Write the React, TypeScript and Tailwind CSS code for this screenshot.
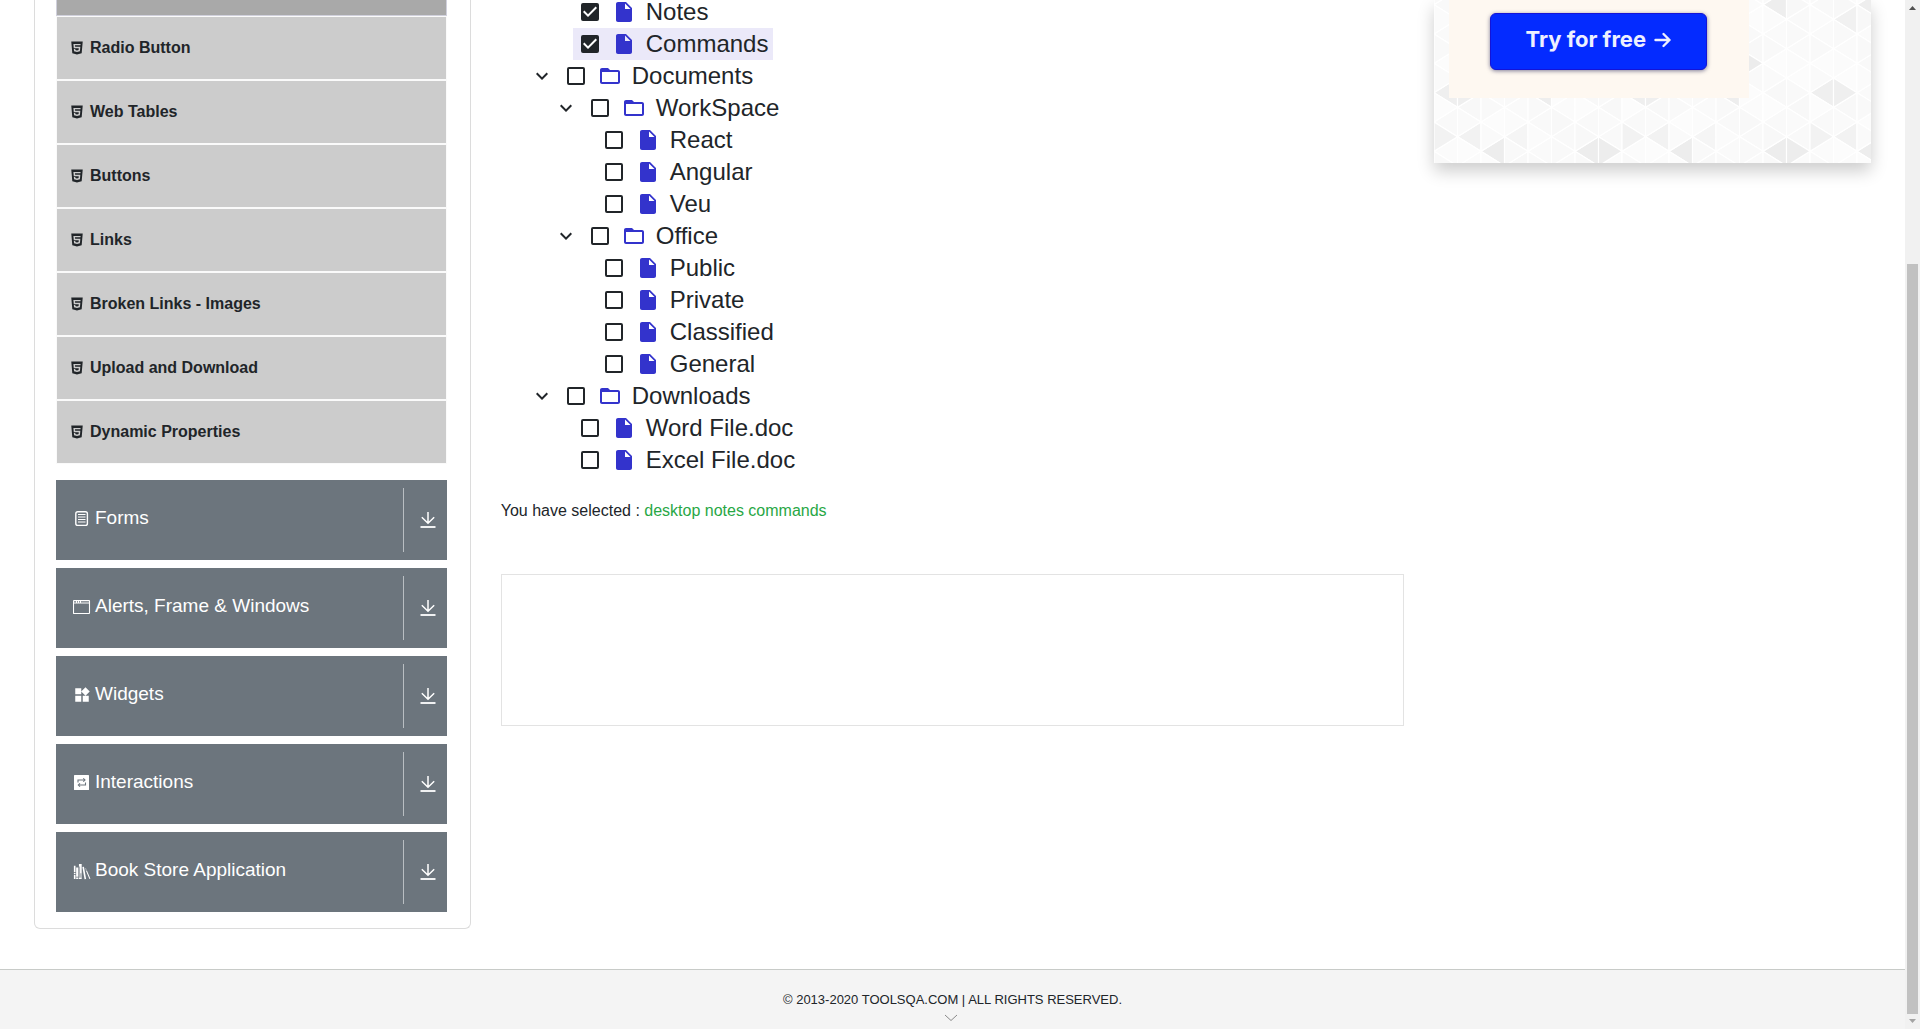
import React from "react";
import { AiFillHtml5 } from "react-icons/ai";
import { MdWidgets, MdInsertDriveFile, MdKeyboardArrowDown } from "react-icons/md";
import { GiBookshelf } from "react-icons/gi";

const menuItems = [
  "Radio Button",
  "Web Tables",
  "Buttons",
  "Links",
  "Broken Links - Images",
  "Upload and Download",
  "Dynamic Properties",
];

function FormsIcon() {
  return (
    <svg viewBox="0 0 18 18" className="size-[18px]" fill="none" stroke="currentColor">
      <rect x="2.8" y="1.8" width="11.600" height="13.600" rx="2" strokeWidth="1.4" />
      <path d="M5 4.500h7.500M5 7h7.500M5 9.500h7.500M5 12h7.500" strokeWidth="1.1" />
    </svg>
  );
}

function WindowIcon() {
  return (
    <svg viewBox="0 0 18 18" className="size-[18px]" fill="none" stroke="currentColor">
      <rect x="0.500" y="2.500" width="16" height="13" rx="0.500" strokeWidth="1.1" />
      <path d="M1 3h15" strokeWidth="1" strokeOpacity="0.5" />
      <path d="M.5 5h16M3.500 2.500v2.500M5.500 2.500v2.500M7.500 2.500v2.500" strokeWidth="1" />
    </svg>
  );
}

function InteractionsIcon() {
  return (
    <svg viewBox="0 0 18 18" className="size-[18px]">
      <rect x="1" y="1" width="15" height="15" rx="0.500" fill="currentColor" />
      <g fill="none" stroke="#6c757d" strokeWidth="1.1">
        <path d="M5 8.500V6h6.500M12.500 8.500V11H6" />
        <path d="M10.300 4.300L12 6l-1.700 1.700M7 9.300L5.300 11 7 12.700" />
      </g>
    </svg>
  );
}

function DownIcon() {
  return (
    <svg viewBox="0 0 16 16" className="size-4" fill="none" stroke="currentColor">
      <path d="M8 0v11M1.800 5.300L8 11.300l6.200-6" strokeWidth="1.500" />
      <path d="M.5 15h15" strokeWidth="1.800" />
    </svg>
  );
}

const groups = [
  { label: "Forms", icon: <FormsIcon /> },
  { label: "Alerts, Frame & Windows", icon: <WindowIcon /> },
  { label: "Widgets", icon: <MdWidgets className="size-[18px]" /> },
  { label: "Interactions", icon: <InteractionsIcon /> },
  { label: "Book Store Application", icon: <GiBookshelf className="size-[18px]" /> },
];

function Sidebar() {
  return (
    <nav className="rounded-b-md border border-t-0 border-[#dcdcdc] pr-[23px] pb-4 pl-[21px]">
      <ul className="mb-4">
        <li className="h-4 border border-t-0 border-[#d0d0dc] bg-[#a9a9a9]" />
        {menuItems.map((item) => (
          <li key={item} className="border border-[#fafafa] bg-[#ccc]">
            <a href="#" className="flex h-[62px] items-center gap-[5px] px-3 text-base font-bold">
              <AiFillHtml5 className="size-4" />
              {item}
            </a>
          </li>
        ))}
      </ul>
      <div className="flex flex-col gap-2">
        {groups.map((g) => (
          <button
            key={g.label}
            type="button"
            className="flex h-20 w-full items-center bg-[#6c757d] text-left text-[19px] text-white"
          >
            <span className="flex grow items-center gap-1 pb-1 pl-[17px]">
              <span className="mt-0.5">{g.icon}</span>
              {g.label}
            </span>
            <span className="flex h-16 items-center border-l border-[#b9bec2] pr-[11px] pl-4">
              <DownIcon />
            </span>
          </button>
        ))}
      </div>
    </nav>
  );
}

type Node = { label: string; level: number; folder?: boolean; checked?: boolean; active?: boolean };

const nodes: Node[] = [
  { label: "Notes", level: 1, checked: true },
  { label: "Commands", level: 1, checked: true, active: true },
  { label: "Documents", level: 0, folder: true },
  { label: "WorkSpace", level: 1, folder: true },
  { label: "React", level: 2 },
  { label: "Angular", level: 2 },
  { label: "Veu", level: 2 },
  { label: "Office", level: 1, folder: true },
  { label: "Public", level: 2 },
  { label: "Private", level: 2 },
  { label: "Classified", level: 2 },
  { label: "General", level: 2 },
  { label: "Downloads", level: 0, folder: true },
  { label: "Word File.doc", level: 1 },
  { label: "Excel File.doc", level: 1 },
];

const indents = ["pl-6", "pl-12", "pl-[72px]"];

function FolderIcon() {
  return (
    <svg viewBox="0 0 24 24" className="size-6 fill-[#3333cc]">
      <path d="M20 6h-8l-2-2H4c-1.100 0-1.990.9-1.990 2L2 18c0 1.100.9 2 2 2h16c1.100 0 2-.9 2-2V8c0-1.100-.9-2-2-2zm0 12H4V8h16v10z" />
    </svg>
  );
}

function TreeRow({ node }: { node: Node }) {
  return (
    <li className={`flex h-8 first:h-7 first:pb-1 ${indents[node.level]}`}>
      {node.folder ? (
        <button type="button" aria-label={`Collapse ${node.label}`} className="flex items-center px-[5px]">
          <MdKeyboardArrowDown className="size-6" />
        </button>
      ) : (
        <span className="w-6" />
      )}
      <label className={`flex items-center ${node.active ? "bg-[#ebe9f9]" : ""}`}>
        <span className="grid place-items-center px-2">
          <input
            type="checkbox"
            defaultChecked={node.checked}
            className="peer col-start-1 row-start-1 size-[18px] appearance-none rounded-[2px] border-2 border-[#212529] checked:bg-[#212529]"
          />
          <svg
            viewBox="0 0 18 18"
            className="pointer-events-none invisible col-start-1 row-start-1 size-[18px] fill-white peer-checked:visible"
          >
            <path d="M7 14L2 9l1.410-1.410L7 11.170l7.590-7.590L16 5l-9 9z" />
          </svg>
        </span>
        <span className="px-[5px]">
          {node.folder ? <FolderIcon /> : <MdInsertDriveFile className="size-6 text-[#3333cc]" />}
        </span>
        <span className="px-[5px] text-2xl leading-6">{node.label}</span>
      </label>
    </li>
  );
}

const COL = 23.5;
const SIDE = 29.33;
const plain = ["#f9f9f9", "#fbfbfb", "#f9f9f9", "#fafafa", "#fcfcfc", "#f8f8f8"];

// Shaded triangles, keyed by column within the eight-column repeat, direction and tip height.
const shaded: Record<string, string> = {
  "2L151": "#ededed",
  "6L151": "#ededed",
  "7R151": "#ededed",
  "0R137": "#f2f2f2",
  "1L137": "#f2f2f2",
  "3L137": "#f5f5f5",
  "0L93": "#efefef",
  "1R93": "#efefef",
  "4L93": "#eeeeee",
  "5R63": "#ececec",
  "6L5": "#eeeeee",
  "2L5": "#eeeeee",
  "1L19": "#f1f1f1",
};

function TrianglePattern() {
  const shapes: React.ReactNode[] = [];
  for (let c = 0; c < 22; c++) {
    for (const dir of ["L", "R"]) {
      const tipEdge = dir === "L" ? c : c + 1;
      const baseEdge = dir === "L" ? c + 1 : c;
      const start = tipEdge % 2 === 0 ? 4.7 : -10;
      for (let k = 0; k < 7; k++) {
        const y = start + k * SIDE;
        const fill =
          shaded[`${c % 8}${dir}${Math.round(y)}`] ?? plain[((c % 8) * 5 + k * 7 + (dir === "L" ? 2 : 0)) % 6];
        const bx = baseEdge * COL;
        shapes.push(
          <polygon
            key={`${c}${dir}${k}`}
            points={`${tipEdge * COL},${y} ${bx},${y - SIDE / 2} ${bx},${y + SIDE / 2}`}
            fill={fill}
          />
        );
      }
    }
  }
  return (
    <svg className="absolute inset-0 size-full" stroke="#fff" strokeWidth="1.2" aria-hidden="true">
      {shapes}
    </svg>
  );
}

function Promo() {
  return (
    <aside className="relative h-[163px] pl-[15px] shadow-[0_8px_16px_rgba(0,0,0,0.2)]">
      <TrianglePattern />
      <div className="relative h-[98px] w-[300px] bg-[#fef8f1] pt-[13px] pl-[41px]">
        <button
          type="button"
          className="flex h-[57px] w-[217px] items-center justify-center gap-2 rounded-md border border-[#1414d8] bg-[#042bff] pb-1 font-[Inter,sans-serif] text-[22px] font-bold text-[#eef0ff] shadow-[0_1px_4px_rgba(0,0,60,0.5)]"
        >
          Try for free
          <svg viewBox="0 0 18 16" className="h-4 w-[18px]" fill="none" stroke="currentColor" strokeWidth="2.4">
            <path d="M1.500 8h14M9.500 2l6 6-6 6" strokeLinecap="round" strokeLinejoin="round" />
          </svg>
        </button>
      </div>
    </aside>
  );
}

function Scrollbar() {
  return (
    <div className="flex w-[15px] shrink-0 flex-col items-center bg-[#f1f1f1]" aria-hidden="true">
      <svg viewBox="0 0 15 15" className="size-[15px] fill-[#505050]">
        <path d="M4 10h7L7.500 6z" />
      </svg>
      <div className="h-[249px] shrink-0" />
      <div className="w-[11px] grow bg-[#c1c1c1]" />
      <svg viewBox="0 0 15 15" className="size-[15px] fill-[#a3a3a3]">
        <path d="M4 5h7L7.500 9z" />
      </svg>
    </div>
  );
}

export default function App() {
  return (
    <div className="flex min-h-screen bg-white font-['Liberation_Sans',Arial,sans-serif] text-[#212529]">
      <div className="flex min-w-0 grow flex-col">
        <div className="grid grid-cols-4 gap-[30px] px-[34px] pb-10">
          <Sidebar />
          <main className="col-span-2">
            <ul>
              {nodes.map((n) => (
                <TreeRow key={n.label} node={n} />
              ))}
            </ul>
            <p className="mt-[23px] text-base leading-6">
              You have selected : <span className="text-[#28a745]">desktop notes commands</span>
            </p>
            <div className="mt-[51px] h-[152px] border border-[#e3e3e3]" />
          </main>
          <Promo />
        </div>
        <footer className="flex grow flex-col items-center border-t border-[#c8cbc8] bg-[#f4f4f4] pt-5 text-[13px] leading-5">
          <p>© 2013-2020 TOOLSQA.COM | ALL RIGHTS RESERVED.</p>
          <svg viewBox="0 0 14 8" className="mt-1 mr-1 h-2 w-3.5" fill="none" stroke="#888">
            <path d="M1 1l6 5.500L13 1" />
          </svg>
        </footer>
      </div>
      <Scrollbar />
    </div>
  );
}
